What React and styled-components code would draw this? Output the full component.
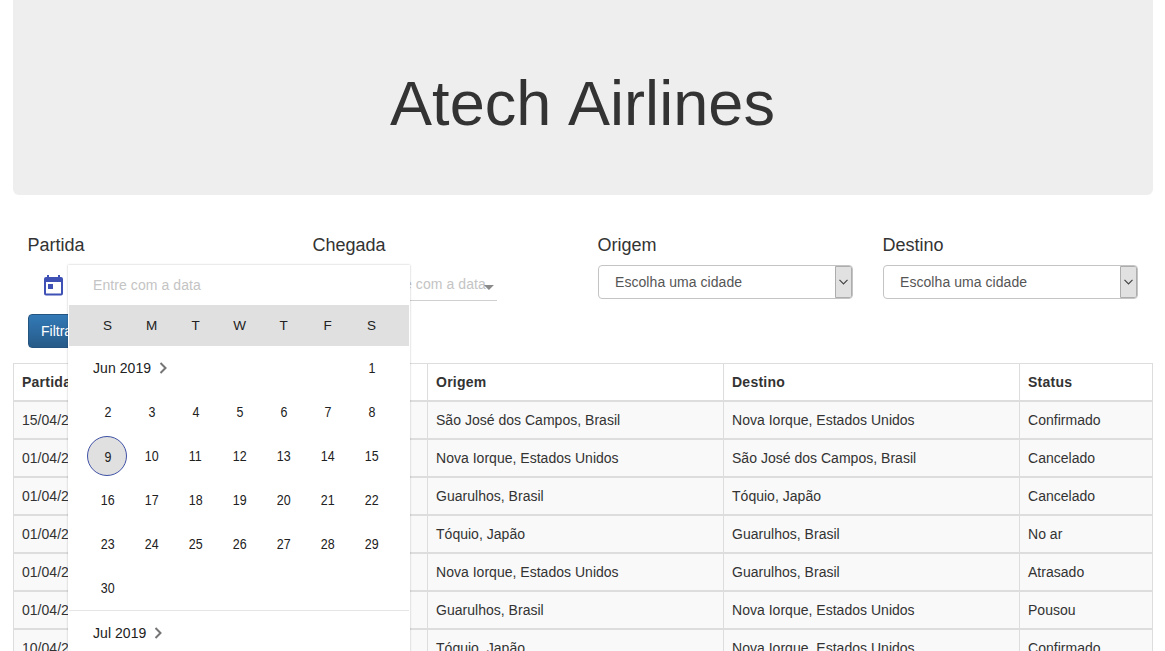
import React from "react";
import styled, { createGlobalStyle } from "styled-components";

const GlobalStyle = createGlobalStyle`
  *, *::before, *::after { box-sizing: border-box; }
  html, body { margin: 0; height: 651px; overflow: hidden; background: #fff; }
  body {
    font-family: "Liberation Sans", Arial, sans-serif;
    font-size: 14px;
    line-height: 20px;
    color: #333;
  }
`;

const Page = styled.div`
  width: 1140px;
  height: 651px;
  margin-left: 13px;
`;

const Jumbotron = styled.header`
  height: 195px;
  padding-top: 69px;
  background: #eee;
  border-radius: 0 0 6px 6px;
  text-align: center;
`;

const Title = styled.h1`
  margin: 0;
  font-size: 63px;
  font-weight: 500;
  line-height: 69px;
  letter-spacing: 0.05px;
  word-spacing: 2.5px;
  text-indent: -1px;
`;

const Filters = styled.section`
  display: grid;
  grid-template-columns: repeat(4, 285px);
  margin-top: 40px;
`;

const Field = styled.div`
  padding: 0 15px;
`;

const FieldTitle = styled.h4`
  margin: 0 0 10px -0.5px;
  font-size: 18px;
  font-weight: 500;
  line-height: 20px;
`;

const SelectBox = styled.div`
  display: flex;
  align-items: stretch;
  width: 255px;
  height: 34px;
  border: 1px solid #c4c4c4;
  border-radius: 4px;
  overflow: hidden;
  color: #555;
`;

const SelectText = styled.span`
  flex: 1;
  padding: 6px 0 0 16px;
  letter-spacing: 0.06px;
`;

const SelectArrow = styled.span`
  display: flex;
  align-items: center;
  justify-content: center;
  width: 17px;
  background: #e1e1e1;
  border: 1px solid #adadad;
  border-radius: 0 2px 2px 0;
`;

const DateField = styled.div`
  position: relative;
  display: flex;
  align-items: flex-start;
  height: 34px;
  padding: 9px 0 0 15px;
`;

const DateInput = styled.div`
  display: flex;
  width: 119px;
  height: 27px;
  margin-left: 29px;
  border-bottom: 1px solid #d0d0d0;
  color: #c4c4c4;
  letter-spacing: 0.08px;
  white-space: nowrap;
`;

const Caret = styled.span`
  width: 10px;
  height: 5px;
  margin: 11px 0 0 -2px;
  background: #8a8a8a;
  clip-path: polygon(0 0, 100% 0, 50% 100%);
`;

const Actions = styled.div`
  margin: 15px 0 15px 15px;
`;

const FilterButton = styled.button`
  display: block;
  height: 34px;
  padding: 0 12px;
  border: 1px solid #245580;
  border-radius: 4px;
  background: linear-gradient(#337ab7, #265a88);
  color: #fff;
  font: inherit;
`;

const Table = styled.div`
  border: solid #ddd;
  border-width: 1px 1px 0 1px;
`;

const Row = styled.div`
  display: grid;
  grid-template-columns: 206px 207px 296px 296px 1fr;
  height: 38px;
  border-bottom: 2px solid #ddd;
  background: ${(p) => (p.$head ? "#fff" : "#f9f9f9")};
  font-weight: ${(p) => (p.$head ? 700 : 400)};
  letter-spacing: ${(p) => (p.$head ? "0.25px" : "0.02px")};
`;

const Cell = styled.div`
  padding: 8px;
  white-space: nowrap;
  & + & { border-left: 1px solid #ddd; }
`;

const Popup = styled.div`
  position: absolute;
  z-index: 2;
  top: 0;
  left: 40px;
  width: 342px;
  height: 400px;
  background: #fff;
  box-shadow: 0 0 2px rgba(0, 0, 0, 0.25);
  color: #212121;
`;

const PopupInput = styled.div`
  height: 40px;
  padding: 10px 25px;
  color: #c4c4c4;
  letter-spacing: 0.08px;
`;

const Week = styled.div`
  display: grid;
  grid-template-columns: repeat(7, 44px);
  justify-content: start;
  align-items: center;
  justify-items: center;
  height: 44px;
  padding-left: 17px;
  font-size: 14px;
`;

const WeekHeader = styled(Week)`
  height: 41px;
  margin: 0 1px;
  padding-left: 16.5px;
  background: #e0e0e0;
  font-size: 13.5px;
`;

const Day = styled.span`
  display: flex;
  align-items: center;
  justify-content: center;
  width: 40px;
  height: 40px;
  padding: ${(p) => (p.$today ? "1px 0 0 1px" : "0 0 1px 1px")};
  border: 1px solid ${(p) => (p.$today ? "#3f51a5" : "transparent")};
  border-radius: 50%;
  background: ${(p) => (p.$today ? "#e0e0e0" : "transparent")};
`;

const DayNumber = styled.span`
  transform: scaleX(0.89);
`;

const MonthLabel = styled.span`
  grid-column: span ${(p) => p.$span};
  justify-self: start;
  display: flex;
  align-items: center;
  gap: 8px;
  padding-left: 8px;
  letter-spacing: 0.06px;
`;

const NextMonth = styled.div`
  margin: 0 1px;
  border-top: 1px solid #e5e5e5;
  padding-left: 16px;

  ${MonthLabel} { height: 44px; }
`;

const CalendarIcon = () => (
  <svg width="21" height="23" viewBox="0 0 21 23">
    <path
      fill="#3f51b5"
      fillRule="evenodd"
      d="M4 1h2v2h9V1h2v2h1a2 2 0 0 1 2 2v14.500a2 2 0 0 1-2 2H3a2 2 0 0 1-2-2V5a2 2 0 0 1 2-2h1zM3 8v11.500h15V8zM5 10h5v5H5z"
    />
  </svg>
);

const Chevron = () => (
  <svg width="9" height="12" viewBox="0 0 9 12" fill="none" stroke="#757575" strokeWidth="2">
    <path d="M1.500 1l5 5-5 5" />
  </svg>
);

const DownArrow = () => (
  <svg width="9" height="6" viewBox="0 0 9 6" fill="none" stroke="#444" strokeWidth="1.200">
    <path d="M.5.8l4 4 4-4" />
  </svg>
);

const weekdays = ["S", "M", "T", "W", "T", "F", "S"];
const weeks = [2, 9, 16, 23, 30].map((first) =>
  Array.from({ length: 7 }, (_, i) => first + i).filter((d) => d <= 30)
);

const SJC = "São José dos Campos, Brasil";
const NYC = "Nova Iorque, Estados Unidos";
const GRU = "Guarulhos, Brasil";
const TYO = "Tóquio, Japão";

const flights = [
  ["15/04/2019", "", SJC, NYC, "Confirmado"],
  ["01/04/2019", "", NYC, SJC, "Cancelado"],
  ["01/04/2019", "", GRU, TYO, "Cancelado"],
  ["01/04/2019", "", TYO, GRU, "No ar"],
  ["01/04/2019", "", NYC, GRU, "Atrasado"],
  ["01/04/2019", "", GRU, NYC, "Pousou"],
  ["10/04/2019", "", TYO, NYC, "Confirmado"],
];

const CitySelect = () => (
  <SelectBox>
    <SelectText>Escolha uma cidade</SelectText>
    <SelectArrow><DownArrow /></SelectArrow>
  </SelectBox>
);

const CalendarPopup = () => (
  <Popup>
    <PopupInput>Entre com a data</PopupInput>
    <WeekHeader>
      {weekdays.map((d, i) => <span key={i}>{d}</span>)}
    </WeekHeader>
    <Week>
      <MonthLabel $span={6}>Jun 2019 <Chevron /></MonthLabel>
      <Day><DayNumber>1</DayNumber></Day>
    </Week>
    {weeks.map((week) => (
      <Week key={week[0]}>
        {week.map((d) => (
          <Day key={d} $today={d === 9}><DayNumber>{d}</DayNumber></Day>
        ))}
      </Week>
    ))}
    <NextMonth>
      <MonthLabel>Jul 2019 <Chevron /></MonthLabel>
    </NextMonth>
  </Popup>
);

export default function App() {
  return (
    <>
      <GlobalStyle />
      <Page>
        <Jumbotron><Title>Atech Airlines</Title></Jumbotron>
        <Filters>
          <Field>
            <FieldTitle>Partida</FieldTitle>
            <DateField>
              <CalendarIcon />
              <CalendarPopup />
            </DateField>
          </Field>
          <Field>
            <FieldTitle>Chegada</FieldTitle>
            <DateField>
              <CalendarIcon />
              <DateInput>Entre com a data<Caret /></DateInput>
            </DateField>
          </Field>
          <Field>
            <FieldTitle>Origem</FieldTitle>
            <CitySelect />
          </Field>
          <Field>
            <FieldTitle>Destino</FieldTitle>
            <CitySelect />
          </Field>
        </Filters>
        <Actions><FilterButton>Filtrar</FilterButton></Actions>
        <Table>
          <Row $head>
            {["Partida", "", "Origem", "Destino", "Status"].map((h, i) => (
              <Cell key={i}>{h}</Cell>
            ))}
          </Row>
          {flights.map((flight, r) => (
            <Row key={r}>
              {flight.map((value, c) => <Cell key={c}>{value}</Cell>)}
            </Row>
          ))}
        </Table>
      </Page>
    </>
  );
}
